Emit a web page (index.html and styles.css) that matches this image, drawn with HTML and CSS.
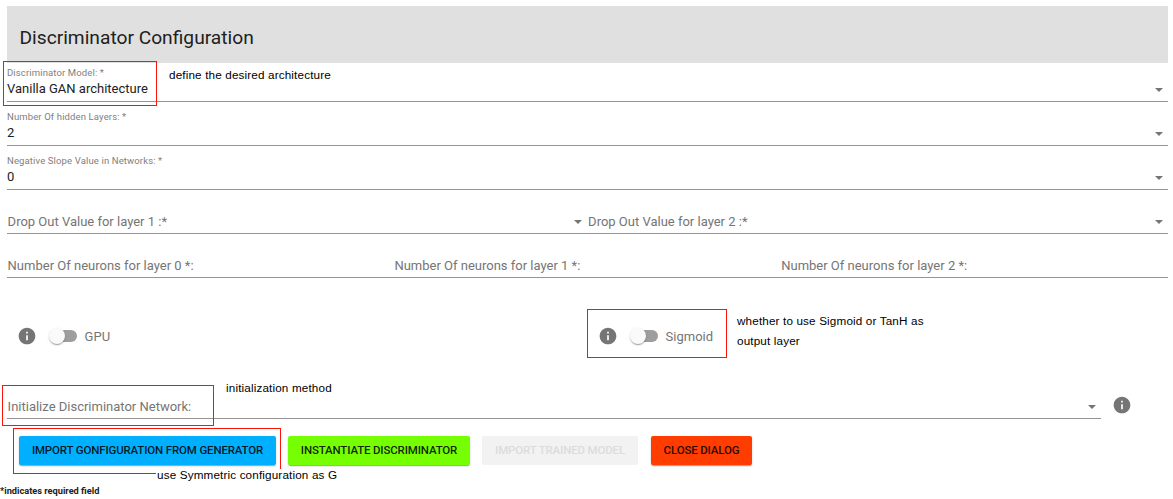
FILE: index.html
```html
<!DOCTYPE html>
<html lang="en">
<head>
<meta charset="utf-8">
<title>Discriminator Configuration</title>
<link rel="stylesheet" href="styles.css">
</head>
<body>
<svg class="defs" width="0" height="0"><symbol id="info" viewBox="0 0 24 24"><path d="M12 2C6.48 2 2 6.48 2 12s4.480 10 10 10 10-4.480 10-10S17.520 2 12 2zm1 15h-2v-6h2v6zm0-8h-2V7h2v2z"/></symbol></svg>
<main class="dialog">
  <header class="title"><h1>Discriminator Configuration</h1></header>
  <form>
    <div class="field first"><label>Discriminator Model: *</label><div class="value">Vanilla GAN architecture</div><i class="arrow"></i></div>
    <div class="field"><label>Number Of hidden Layers: *</label><div class="value">2</div><i class="arrow"></i></div>
    <div class="field"><label>Negative Slope Value in Networks: *</label><div class="value">0</div><i class="arrow"></i></div>
    <div class="row halves">
      <div class="field empty"><span>Drop Out Value for layer 1 :*</span><i class="arrow"></i></div>
      <div class="field empty"><span>Drop Out Value for layer 2 :*</span><i class="arrow"></i></div>
    </div>
    <div class="row thirds">
      <div class="field empty"><span>Number Of neurons for layer 0 *:</span></div>
      <div class="field empty"><span>Number Of neurons for layer 1 *:</span></div>
      <div class="field empty"><span>Number Of neurons for layer 2 *:</span></div>
    </div>
    <div class="row toggles">
      <div class="toggle"><svg class="info"><use href="#info"/></svg><div class="switch"><div class="thumb"></div></div><span>GPU</span></div>
      <div class="toggle"><svg class="info"><use href="#info"/></svg><div class="switch"><div class="thumb"></div></div><span>Sigmoid</span></div>
    </div>
    <div class="row init">
      <div class="field empty"><span>Initialize Discriminator Network:</span><i class="arrow"></i></div>
      <svg class="info"><use href="#info"/></svg>
    </div>
    <div class="actions">
      <button type="button" class="blue">IMPORT GONFIGURATION FROM GENERATOR</button>
      <button type="button" class="green">INSTANTIATE DISCRIMINATOR</button>
      <button type="button" class="off" disabled>IMPORT TRAINED MODEL</button>
      <button type="button" class="red">CLOSE DIALOG</button>
    </div>
  </form>
  <footer>*indicates required field</footer>
</main>
<div class="box box-model"></div>
<div class="box box-sigmoid"></div>
<div class="box box-init"></div>
<div class="box box-import"></div>
<p class="note note-model">define the desired architecture</p>
<p class="note note-sigmoid">whether to use Sigmoid or TanH as<br>output layer</p>
<p class="note note-init">initialization method</p>
<p class="note note-import">use Symmetric configuration as G</p>
</body>
</html>
```
FILE: styles.css
```css
* { box-sizing: border-box; }
body { margin: 0; height: 499px; overflow: hidden; position: relative; background: #fff; font-family: Roboto, sans-serif; color: #212121; }
.defs { position: absolute; }
.dialog { padding: 6px 5px 0 7px; }
.title { height: 57px; background: #e0e0e0; padding: 16px 12.5px; }
h1 { margin: 0; font-size: 19.2px; line-height: 32px; font-weight: 400; }
.field { position: relative; height: 44px; border-bottom: 1px solid #949494; padding-top: 9px; }
.field.first { height: 39px; padding-top: 4px; }
label { display: block; font-size: 9.5px; line-height: 12px; letter-spacing: .13px; color: #808080; }
.value { font-size: 13px; line-height: 16px; margin-top: 2px; }
.arrow { position: absolute; right: 5px; bottom: 9px; width: 0; height: 0; border: solid transparent; border-width: 4px 4px 0; border-top-color: #757575; }
.halves .field:first-child .arrow { right: 6px; }
.row { display: flex; }
.row .field { flex: 1; }
.row .empty { padding: 24px 0 0 .6px; font-size: 13px; line-height: 16px; color: #757575; }
.thirds .field + .field { padding-left: 0; }
.toggles { height: 117px; padding: 48px 0 0 10px; }
.toggle { display: flex; flex: none; align-items: center; height: 20px; width: 581px; color: #757575; font-size: 13px; }
.info { width: 20px; height: 20px; fill: #757575; flex: none; }
.switch { width: 26px; height: 12px; border-radius: 6px; background: #9e9e9e; margin: 0 7.6px 0 14px; position: relative; }
.thumb { position: absolute; left: -2px; top: -2px; width: 16px; height: 16px; border-radius: 50%; background: #fafafa; box-shadow: 0 2px 1px -1px #0003, 0 1px 1px #0002, 0 1px 3px #0002; }
.init { height: 24px; align-items: flex-end; }
.row.init .field { flex: none; width: 1094px; height: 24px; padding-top: 4px; }
.init .info { margin: 0 0 4px 11px; }
.actions { display: flex; padding: 17px 0 0 12px; }
button { height: 29px; border: 0; border-radius: 2px; padding: 0; font: 500 11.5px/29px Roboto, sans-serif; letter-spacing: -.16px; color: #000000de; box-shadow: 0 2px 1px -1px #0003, 0 1px 1px #0002, 0 1px 3px #0002; white-space: nowrap; }
.blue { width: 257px; margin-right: 12px; background: #00b0ff; }
.green { width: 182px; margin-right: 12px; background: #76ff03; }
.off { width: 156px; margin-right: 13px; background: #f2f2f2; color: #dcdcdc; box-shadow: none; }
.red { width: 101px; background: #ff3d00; }
footer { margin: 20px 0 0 -7px; font-size: 9.23px; line-height: 12px; font-weight: 700; }
.box { position: absolute; border: 1px solid #fa140a; }
.box-model { left: 3px; top: 61px; width: 154px; height: 45px; }
.box-sigmoid { left: 587px; top: 309px; width: 140px; height: 49px; }
.box-init { left: 2px; top: 385px; width: 212px; height: 41px; }
.box-import { left: 13px; top: 428px; width: 268px; height: 46px; }
.note { position: absolute; margin: 0; font: 11.7px/20px "Liberation Sans", Arial, sans-serif; letter-spacing: .15px; color: #000; white-space: nowrap; }
.note-model { left: 169px; top: 65px; }
.note-sigmoid { left: 737px; top: 311px; }
.note-init { left: 226px; top: 378px; }
.note-import { left: 156px; top: 469px; height: 14px; line-height: 12px; padding-left: 1px; background: #fff; }
```
